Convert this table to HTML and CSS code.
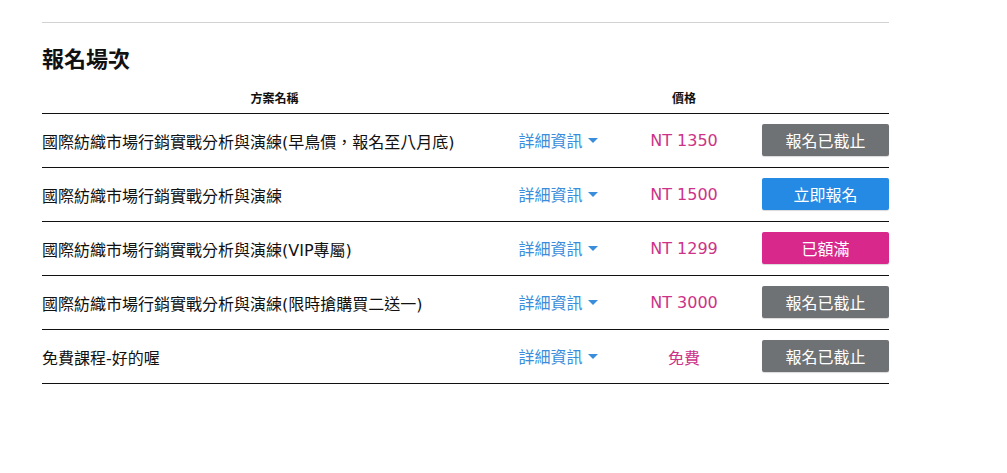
FILE: index.html
```html
<!DOCTYPE html>
<html lang="zh-Hant">
<head>
<meta charset="utf-8">
<link rel="stylesheet" href="styles.css">
</head>
<body>
<div class="wrap">
  <h2 class="title">報名場次</h2>
  <div class="table">
    <div class="row head">
      <div class="h-name">方案名稱</div>
      <div></div>
      <div class="h-price">價格</div>
      <div></div>
    </div>
    <div class="row">
      <div class="c-name">國際紡織市場行銷實戰分析與演練(早鳥價，報名至八月底)</div>
      <div class="c-detail"><span class="link">詳細資訊<span class="caret"></span></span></div>
      <div class="c-price">NT 1350</div>
      <div class="c-btn"><span class="btn gray">報名已截止</span></div>
    </div>
    <div class="row">
      <div class="c-name">國際紡織市場行銷實戰分析與演練</div>
      <div class="c-detail"><span class="link">詳細資訊<span class="caret"></span></span></div>
      <div class="c-price">NT 1500</div>
      <div class="c-btn"><span class="btn blue">立即報名</span></div>
    </div>
    <div class="row">
      <div class="c-name">國際紡織市場行銷實戰分析與演練(VIP專屬)</div>
      <div class="c-detail"><span class="link">詳細資訊<span class="caret"></span></span></div>
      <div class="c-price">NT 1299</div>
      <div class="c-btn"><span class="btn pink">已額滿</span></div>
    </div>
    <div class="row">
      <div class="c-name">國際紡織市場行銷實戰分析與演練(限時搶購買二送一)</div>
      <div class="c-detail"><span class="link">詳細資訊<span class="caret"></span></span></div>
      <div class="c-price">NT 3000</div>
      <div class="c-btn"><span class="btn gray">報名已截止</span></div>
    </div>
    <div class="row">
      <div class="c-name">免費課程-好的喔</div>
      <div class="c-detail"><span class="link">詳細資訊<span class="caret"></span></span></div>
      <div class="c-price">免費</div>
      <div class="c-btn"><span class="btn gray">報名已截止</span></div>
    </div>
  </div>
</div>
</body>
</html>
```

FILE: styles.css
```css
html, body {
  margin: 0;
  padding: 0;
  background: #fff;
}
body {
  font-family: "DejaVu Sans", "Noto Sans CJK TC", sans-serif;
  color: #111;
}
.wrap {
  margin: 22px 0 0 42px;
  width: 847px;
  border-top: 1px solid #d2d2d2;
}
.title {
  margin: 0;
  padding-top: 19px;
  font-size: 22px;
  line-height: 30px;
  font-weight: bold;
  font-family: "Noto Sans CJK TC", sans-serif;
  color: #111;
}
.row {
  display: grid;
  grid-template-columns: 456px 118px 136px 137px;
  align-items: center;
  border-bottom: 1px solid #111;
  height: 53px;
}
.row.head {
  height: 24px;
  padding-top: 17px;
  align-items: start;
  font-size: 12px;
  line-height: 18px;
  font-weight: bold;
  font-family: "Noto Sans CJK TC", sans-serif;
  color: #111;
}
.h-name {
  text-align: center;
  padding-left: 9px;
}
.h-price {
  text-align: center;
}
.c-name {
  font-size: 16px;
  color: #111;
  white-space: nowrap;
}
.c-detail {
  text-align: center;
  margin-bottom: 1px;
}
.link {
  display: inline-flex;
  align-items: center;
  color: #3a8ddb;
  font-size: 16px;
  font-family: "Noto Sans CJK TC", sans-serif;
  padding-left: 2px;
}
.caret {
  display: inline-block;
  width: 0;
  height: 0;
  margin-left: 5px;
  border-left: 5px solid transparent;
  border-right: 5px solid transparent;
  border-top: 5px solid #3a8ddb;
}
.c-price {
  text-align: center;
  color: #cc3388;
  font-size: 16px;
}
.c-btn {
  display: flex;
  justify-content: flex-end;
  margin-bottom: 1px;
}
.btn {
  display: block;
  width: 127px;
  height: 32px;
  line-height: 32px;
  text-align: center;
  color: #fff;
  font-size: 16px;
  font-family: "Noto Sans CJK TC", sans-serif;
  border-radius: 2px;
  box-shadow: 0 1px 1px rgba(0,0,0,0.15);
}
.btn.gray { background: #6f7275; }
.btn.blue { background: #258ae3; }
.btn.pink { background: #d8288c; }
```
